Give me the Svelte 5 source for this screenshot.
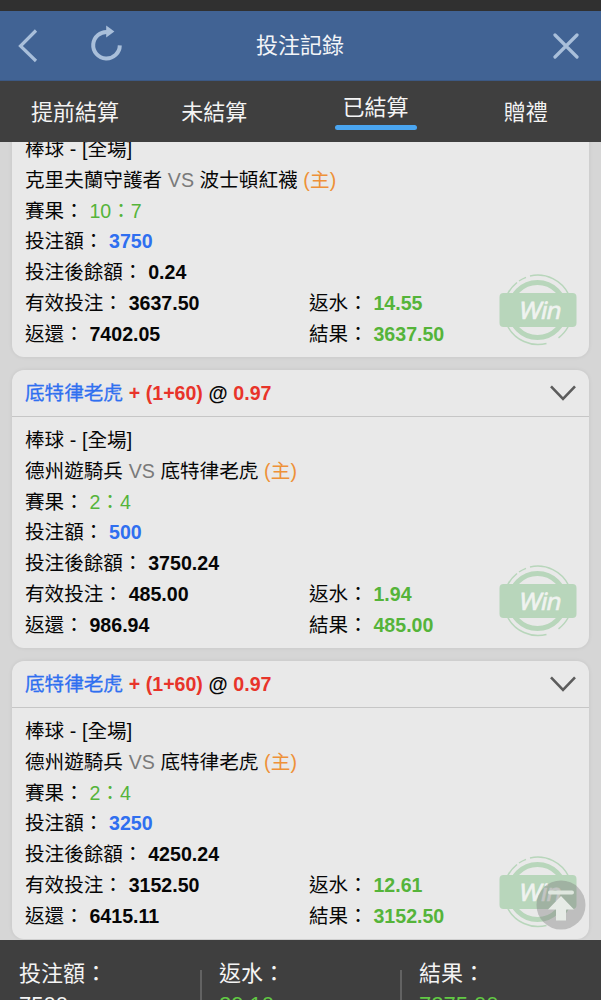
<script>
  const tabs = [
    { label: '提前結算' },
    { label: '未結算', badge: true },
    { label: '已結算', active: true },
    { label: '贈禮' }
  ];

  const bets = [
    {
      away: '克里夫蘭守護者',
      home: '波士頓紅襪',
      score: '10：7',
      amount: '3750',
      balance: '0.24',
      valid: '3637.50',
      rebate: '14.55',
      returned: '7402.05',
      result: '3637.50'
    },
    {
      pick: '底特律老虎',
      line: '+ (1+60)',
      odds: '0.97',
      away: '德州遊騎兵',
      home: '底特律老虎',
      score: '2：4',
      amount: '500',
      balance: '3750.24',
      valid: '485.00',
      rebate: '1.94',
      returned: '986.94',
      result: '485.00'
    },
    {
      pick: '底特律老虎',
      line: '+ (1+60)',
      odds: '0.97',
      away: '德州遊騎兵',
      home: '底特律老虎',
      score: '2：4',
      amount: '3250',
      balance: '4250.24',
      valid: '3152.50',
      rebate: '12.61',
      returned: '6415.11',
      result: '3152.50'
    }
  ];

  const totals = [
    { label: '投注額', value: '7500' },
    { label: '返水', value: '29.10', win: true },
    { label: '結果', value: '7275.00', win: true }
  ];
</script>

<div class="page">
  <div class="status-bar"></div>

  <header class="navbar">
    <div class="nav-left">
      <svg class="back" width="22" height="34" viewBox="0 0 22 34">
        <path d="M19 1.5 3.5 17l15.5 15" />
      </svg>
      <svg class="refresh" width="34" height="38" viewBox="0 0 34 38">
        <path class="arc" d="M18 7A13.3 13.3 0 1 0 29.8 20.4" />
        <path class="head" d="M16.2 0.4v12l8.2-6z" />
      </svg>
    </div>
    <h1>投注記錄</h1>
    <svg class="close" width="26" height="26" viewBox="0 0 26 26">
      <path d="M2 2 24 24M24 2 2 24" />
    </svg>
  </header>

  <nav class="tabs">
    {#each tabs as tab}
      <div class="tab" class:active={tab.active} class:has-badge={tab.badge}>
        <span>{tab.label}</span>
      </div>
    {/each}
  </nav>

  <main class="list">
    {#each bets as bet}
      <section class="card">
        {#if bet.pick}
          <div class="card-head">
            <div>
              <span class="pick">{bet.pick}</span>
              <b class="red">{bet.line}</b> <b>@</b> <b class="red">{bet.odds}</b>
            </div>
            <svg width="28" height="18" viewBox="0 0 28 18">
              <path d="M2 2.3 14 14.8 26 2.3" />
            </svg>
          </div>
        {/if}
        <div class="card-body">
          <div class="row">棒球 - [全場]</div>
          <div class="row">
            {bet.away} <span class="vs">VS</span>
            {bet.home} <span class="host">(主)</span>
          </div>
          <div class="row">賽果： <span class="green">{bet.score}</span></div>
          <div class="row">投注額： <b class="blue">{bet.amount}</b></div>
          <div class="row">投注後餘額： <b>{bet.balance}</b></div>
          <div class="row split">
            <div>有效投注： <b>{bet.valid}</b></div>
            <div>返水： <b class="green">{bet.rebate}</b></div>
          </div>
          <div class="row split">
            <div>返還： <b>{bet.returned}</b></div>
            <div>結果： <b class="green">{bet.result}</b></div>
          </div>
          <!-- win stamp in the corner -->
          <svg class="stamp" width="78" height="72" viewBox="0 0 78 72">
            <circle class="ring" cx="38.5" cy="36" r="27.5" />
            <path class="thin" d="M31 2A34.5 34.5 0 0 1 70 21" />
            <path class="thin" d="M8.5 20A34.5 34.5 0 0 1 18 8.5M20 7A34.5 34.5 0 0 1 27 3.4" />
            <path class="thin" d="M8.5 52A34.5 34.5 0 0 0 47.5 69.4" />
            <path class="thin" d="M69.5 52A34.5 34.5 0 0 1 59.5 63.8" />
            <rect x="0.5" y="19" width="77" height="34" rx="4" />
            <text transform="translate(19 44.5) skewX(-12)" textLength="42">Win</text>
          </svg>
        </div>
      </section>
    {/each}
  </main>

  <footer class="totals">
    {#each totals as total}
      <div class="total">
        <div>{total.label}：</div>
        <div class:win={total.win}>{total.value}</div>
      </div>
    {/each}
  </footer>

  <svg class="to-top" width="50" height="50" viewBox="0 0 50 50">
    <circle cx="25" cy="25" r="24.5" />
    <path class="bar" d="M14 12.5H36" />
    <path class="arrow" d="M25 16 38 29.5H30V40.5H20V29.5H12Z" />
  </svg>
</div>

<style>
  :global(body) {
    background: #d6d6d6;
    overflow: hidden;
  }

  .page {
    position: relative;
    display: flex;
    flex-direction: column;
    height: 1000px;
    overflow: hidden;
    font-family: 'Liberation Sans', 'Noto Sans CJK TC', sans-serif;
    font-size: 19.6px;
    color: #060606;
  }

  .status-bar {
    flex: none;
    height: 11px;
    background: #303030;
  }

  .navbar {
    flex: none;
    display: grid;
    grid-template-columns: 1fr auto 1fr;
    align-items: center;
    height: 70px;
    padding: 0 22px 0 17px;
    box-sizing: border-box;
    background: #416394;
    border-bottom: 1px solid #3c5984;
    color: #f3f5f8;
  }

  .nav-left {
    display: flex;
    align-items: center;
    gap: 51px;
  }

  .refresh {
    margin-top: -4px;
  }

  .navbar h1 {
    margin: 0 -2px 0 2px;
    font-size: 22px;
    font-weight: 400;
    line-height: 32px;
  }

  .navbar path {
    fill: none;
    stroke: #a9bfda;
    stroke-width: 3.2;
  }

  .navbar .arc {
    stroke-width: 4;
  }

  .navbar .head {
    fill: #a9bfda;
    stroke: none;
  }

  .close {
    justify-self: end;
  }

  .close path {
    stroke-linecap: round;
  }

  .tabs {
    flex: none;
    display: grid;
    grid-template-columns: repeat(4, 1fr);
    height: 61px;
    background: #3f3f3f;
    color: #f4f4f4;
    font-size: 22px;
    line-height: 32px;
  }

  .tab {
    display: flex;
    align-items: center;
    justify-content: center;
    padding-top: 3px;
  }

  .tab.has-badge {
    padding-right: 22px;
  }

  .tab.active {
    align-items: flex-start;
    padding-top: 11px;
  }

  .tab.active span {
    display: flex;
    flex-direction: column;
    gap: 1px;
    line-height: 32px;
  }

  .tab.active span::after {
    content: '';
    height: 5px;
    margin: 0 -8px;
    border-radius: 3px;
    background: #4aa5f0;
  }

  .list {
    flex: 1;
    display: flex;
    flex-direction: column;
    gap: 13px;
    min-height: 0;
    padding: 0 12px;
    overflow: hidden;
    background: #d6d6d6;
  }

  .card {
    flex: none;
    background: #e9e9e9;
    border-radius: 12px;
    box-shadow: 0 0 4px rgba(0, 0, 0, 0.08);
  }

  /* the list is scrolled part way into its first card */
  .card:first-child {
    margin-top: -16px;
  }

  .card-head {
    display: flex;
    align-items: center;
    justify-content: space-between;
    height: 46px;
    padding: 0 12px 0 13px;
    border-bottom: 1px solid #c6c6c6;
    line-height: 30px;
    word-spacing: 0.2px;
  }

  .card-head path {
    fill: none;
    stroke: #5c5c5c;
    stroke-width: 2.6;
  }

  .pick {
    color: #2f6ff0;
    -webkit-text-stroke: 0.3px #2f6ff0;
  }

  .card-body {
    position: relative;
    height: 231px;
    padding: 8px 13px 0;
    box-sizing: border-box;
  }

  .row {
    height: 30.8px;
    line-height: 30.8px;
    white-space: nowrap;
    word-spacing: 0.2px;
  }

  .split {
    display: grid;
    grid-template-columns: 284px 1fr;
  }

  .vs {
    color: #7a7a7a;
  }

  .host {
    color: #ee9138;
    letter-spacing: 0.2px;
  }

  .green {
    color: #55b43a;
  }

  .blue {
    color: #2f6ff0;
  }

  .red {
    color: #e8342a;
  }

  .stamp {
    position: absolute;
    right: 12px;
    bottom: 11px;
  }

  .stamp circle,
  .stamp path {
    fill: none;
    stroke: #b8d6bb;
  }

  .stamp .ring {
    stroke-width: 5;
  }

  .stamp .thin {
    stroke-width: 1.5;
  }

  .stamp rect {
    fill: #b8d6bb;
  }

  .stamp text {
    fill: #f0f3f0;
    stroke: #f0f3f0;
    stroke-width: 0.7px;
    font-family: 'Noto Sans', 'Open Sans', sans-serif;
    font-size: 24px;
  }

  .totals {
    flex: none;
    display: grid;
    grid-template-columns: repeat(3, 200px);
    height: 60px;
    overflow: hidden;
    background: #3f3f3f;
    color: #f4f4f4;
    font-size: 22px;
    line-height: 31px;
  }

  .total {
    height: 80px;
    padding: 18px 0 0 19px;
    box-sizing: border-box;
  }

  .total + .total {
    background: linear-gradient(#626262, #626262) 0 30px / 2px 100% no-repeat;
  }

  .win {
    color: #62c944;
  }

  .to-top {
    position: absolute;
    top: 880px;
    left: 536px;
  }

  .to-top circle {
    fill: rgba(120, 120, 120, 0.38);
  }

  .to-top .bar {
    stroke: #dfe7df;
    stroke-width: 4;
    stroke-linecap: round;
  }

  .to-top .arrow {
    fill: #e6ebe6;
  }
</style>
